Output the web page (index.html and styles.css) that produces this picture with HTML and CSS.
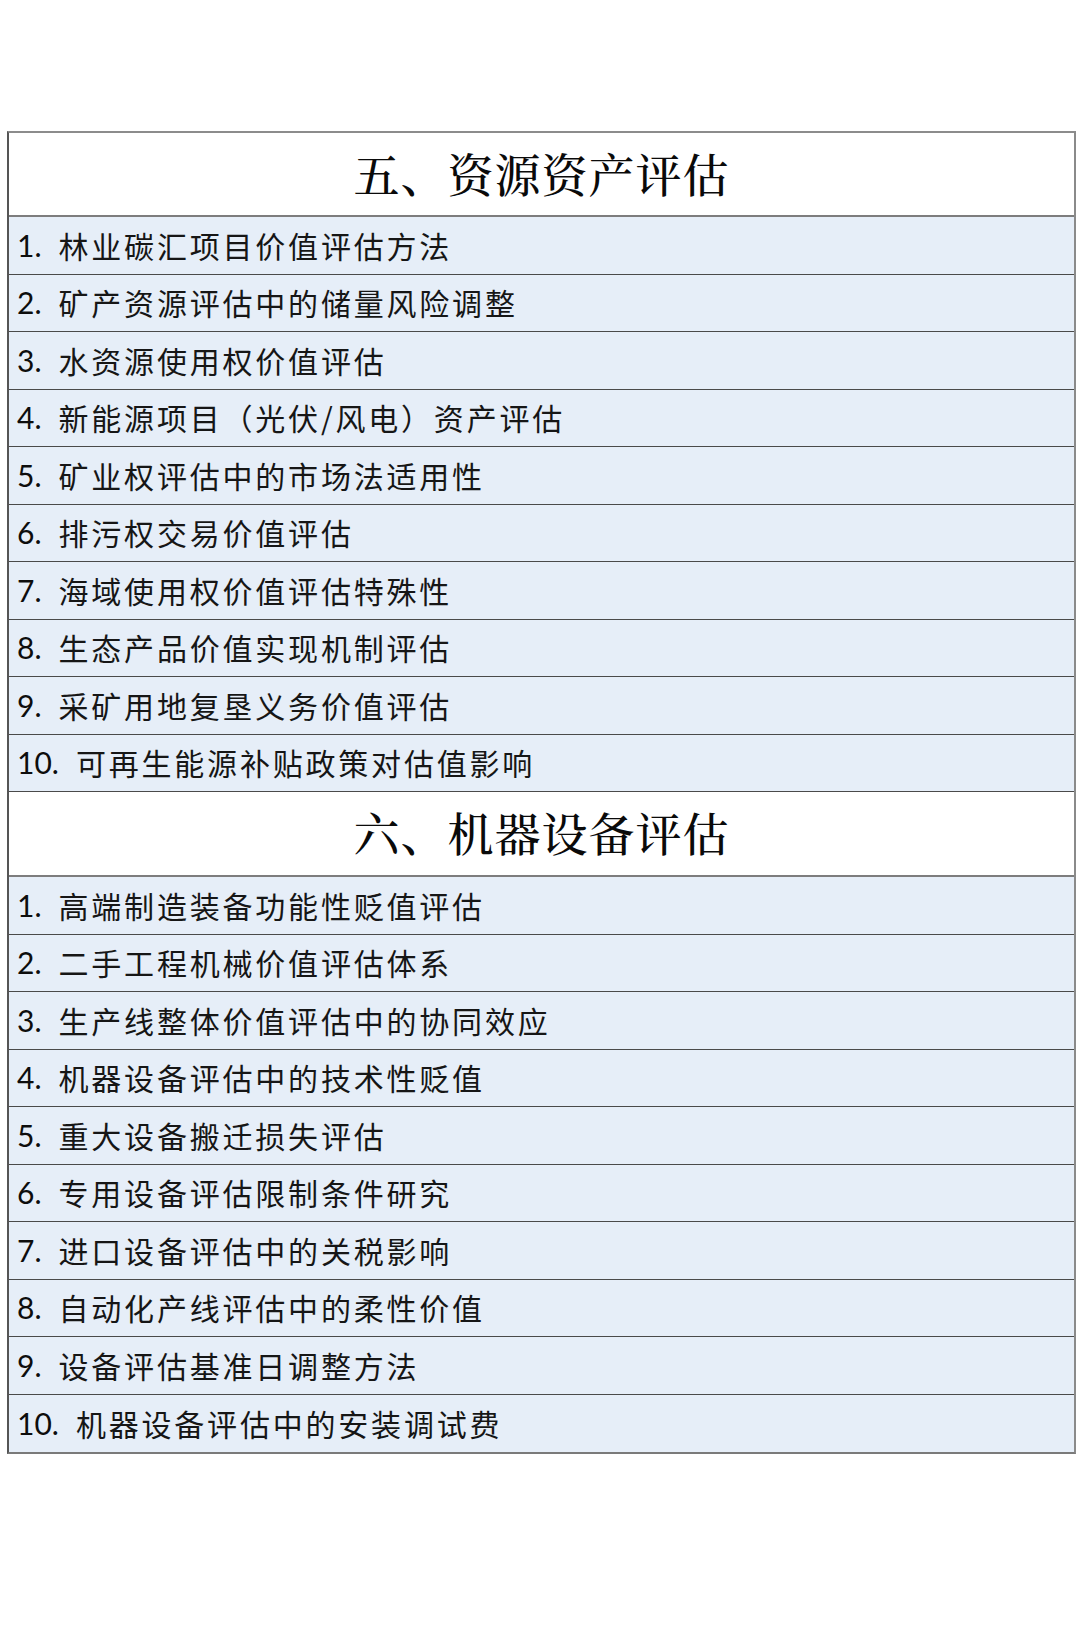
FILE: index.html
```html
<!DOCTYPE html>
<html lang="zh-CN">
<head>
<meta charset="utf-8">
<title>评估专题</title>
<link rel="stylesheet" href="styles.css">
</head>
<body>
<div class="sheet">
  <section class="section">
    <h2 class="title">五、资源资产评估</h2>
    <ul class="list">
      <li class="row"><span class="num">1.</span><span class="txt">林业碳汇项目价值评估方法</span></li>
      <li class="row"><span class="num">2.</span><span class="txt">矿产资源评估中的储量风险调整</span></li>
      <li class="row"><span class="num">3.</span><span class="txt">水资源使用权价值评估</span></li>
      <li class="row"><span class="num">4.</span><span class="txt">新能源项目（光伏/风电）资产评估</span></li>
      <li class="row"><span class="num">5.</span><span class="txt">矿业权评估中的市场法适用性</span></li>
      <li class="row"><span class="num">6.</span><span class="txt">排污权交易价值评估</span></li>
      <li class="row"><span class="num">7.</span><span class="txt">海域使用权价值评估特殊性</span></li>
      <li class="row"><span class="num">8.</span><span class="txt">生态产品价值实现机制评估</span></li>
      <li class="row"><span class="num">9.</span><span class="txt">采矿用地复垦义务价值评估</span></li>
      <li class="row"><span class="num">10.</span><span class="txt">可再生能源补贴政策对估值影响</span></li>
    </ul>
  </section>
  <section class="section">
    <h2 class="title">六、机器设备评估</h2>
    <ul class="list">
      <li class="row"><span class="num">1.</span><span class="txt">高端制造装备功能性贬值评估</span></li>
      <li class="row"><span class="num">2.</span><span class="txt">二手工程机械价值评估体系</span></li>
      <li class="row"><span class="num">3.</span><span class="txt">生产线整体价值评估中的协同效应</span></li>
      <li class="row"><span class="num">4.</span><span class="txt">机器设备评估中的技术性贬值</span></li>
      <li class="row"><span class="num">5.</span><span class="txt">重大设备搬迁损失评估</span></li>
      <li class="row"><span class="num">6.</span><span class="txt">专用设备评估限制条件研究</span></li>
      <li class="row"><span class="num">7.</span><span class="txt">进口设备评估中的关税影响</span></li>
      <li class="row"><span class="num">8.</span><span class="txt">自动化产线评估中的柔性价值</span></li>
      <li class="row"><span class="num">9.</span><span class="txt">设备评估基准日调整方法</span></li>
      <li class="row"><span class="num">10.</span><span class="txt">机器设备评估中的安装调试费</span></li>
    </ul>
  </section>
</div>
</body>
</html>
```

FILE: styles.css
```css
* {
  box-sizing: border-box;
}

html, body {
  margin: 0;
  padding: 0;
  background: #ffffff;
}

body {
  padding: 131px 4px 0 7px;
  font-family: "Noto Sans CJK SC", sans-serif;
  color: #111111;
}

.sheet {
  width: 1069px;
  border-top: 2px solid #8c8c8c;
  border-left: 2px solid #555555;
  border-right: 2px solid #8a8a8a;
  border-bottom: 2px solid #7a7a7a;
}

.section {
  display: flex;
  flex-direction: column;
}

.title {
  margin: 0;
  height: 84px;
  padding-bottom: 5px;
  display: flex;
  align-items: center;
  justify-content: center;
  font-family: "Noto Serif CJK SC", "Noto Sans CJK SC", serif;
  font-size: 46px;
  font-weight: 500;
  letter-spacing: 1px;
  color: #0a0a0a;
  background: #ffffff;
  border-bottom: 2px solid #7d7d7d;
}

.section + .section .title {
  height: 85px;
}

.list {
  list-style: none;
  margin: 0;
  padding: 0;
}

.row {
  height: 57.5px;
  display: flex;
  align-items: center;
  padding: 0 0 1px 8px;
  background: #e6eef8;
  border-bottom: 1px solid #4a4a4a;
}

.section:last-child .row:last-child {
  border-bottom: none;
}

.num {
  font-family: Lato, "Liberation Sans", sans-serif;
  font-size: 30px;
  color: #0d0d0d;
  margin-right: 17px;
  line-height: 1;
}

.txt {
  font-family: "Noto Sans CJK SC", sans-serif;
  font-size: 30px;
  letter-spacing: 2.8px;
  color: #161616;
  line-height: 1;
}
```
